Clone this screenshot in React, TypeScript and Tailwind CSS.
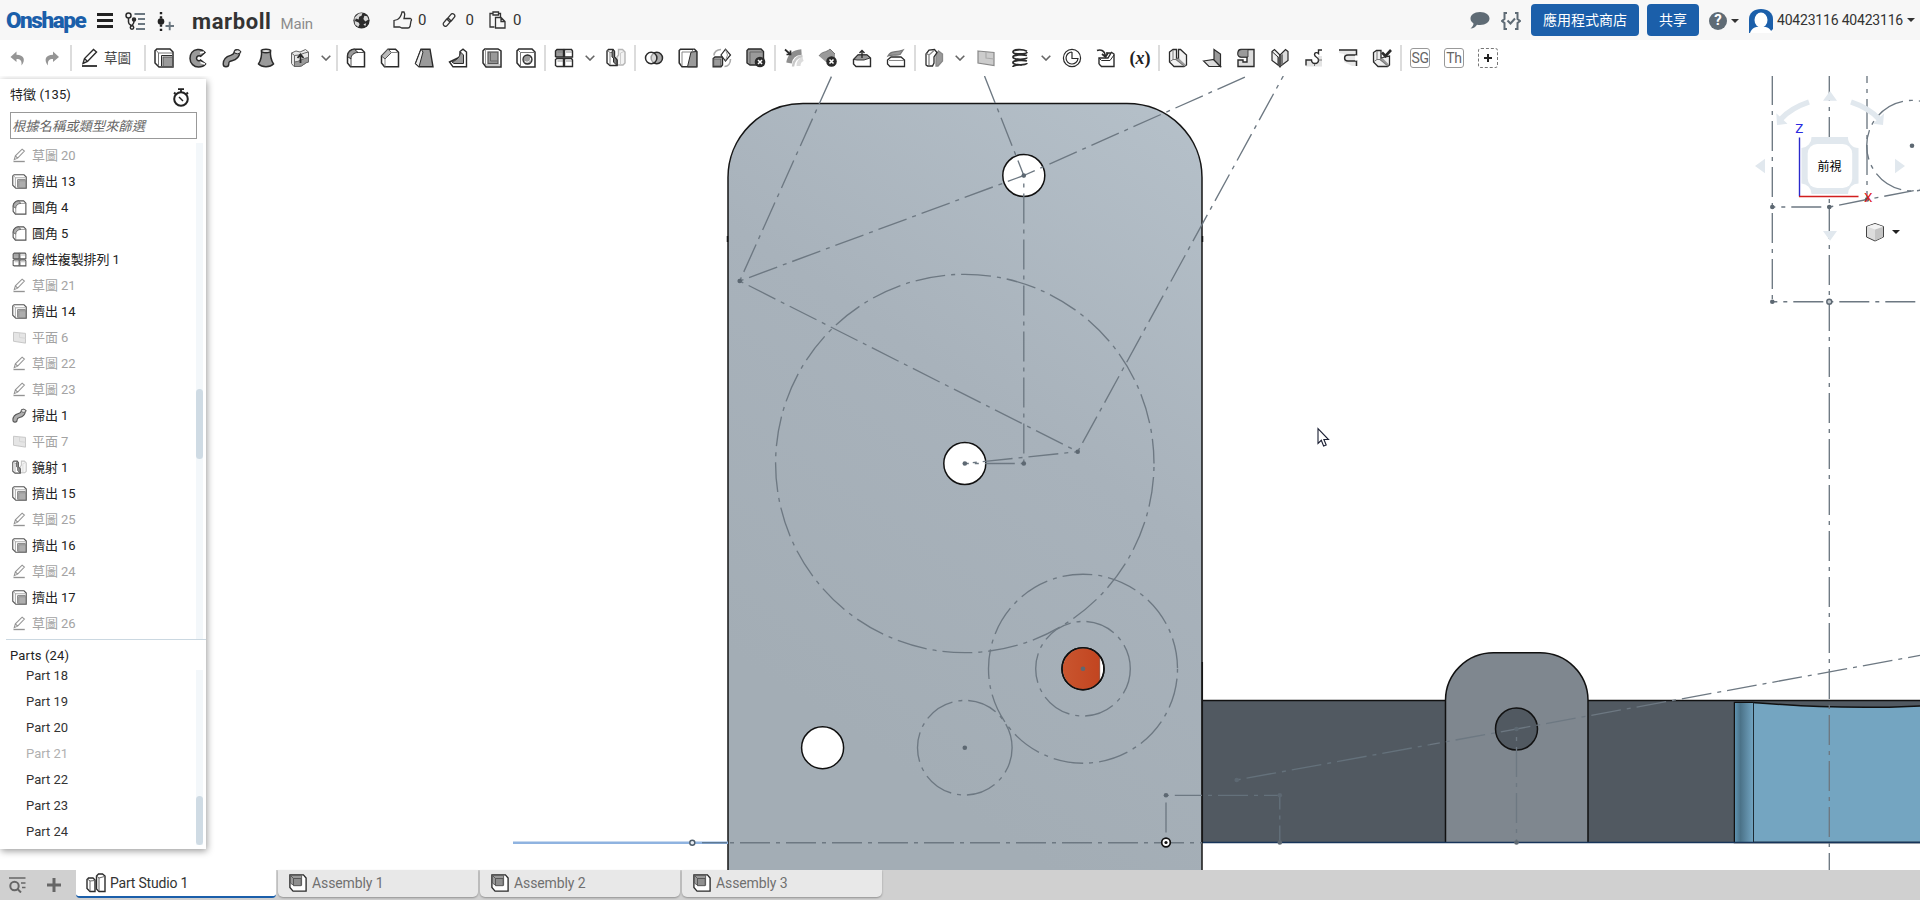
import React from "react";

const K = "#2b2b2b";
const G = "#9a9a9a";

const icons: Record<string, React.ReactNode> = {
  undo: <path d="M8.500 3.500 L2.500 9 L8.500 14 V11 C12.500 11 14 12.500 13.500 17.500 C18 12 16 7 8.500 6.800 Z" fill="#959595" />,
  redo: <path d="M11 3.500 L17 9 L11 14 V11 C7 11 5.500 12.500 6 17.500 C1.500 12 3.500 7 11 6.800 Z" fill="#959595" />,
  pen: (
    <g fill="none" stroke={K} strokeWidth="1.4">
      <path d="M3 15.500 L4.500 10.500 L13.500 1.500 L16.500 4 L7.500 13.500 Z M4.500 10.500 L7.500 13.500" />
      <path d="M2 18 H17" strokeWidth="1.8" />
    </g>
  ),
  extrude: (
    <g stroke={K} strokeWidth="1.5">
      <path d="M1 15 V2.800 L2.800 1 H16 L19 4 V19 H5 Z" fill="#fff" />
      <path d="M4.500 18 V5 H18 M1.500 1.500 L4.500 5" fill="none" stroke="#777" strokeWidth="1" />
      <path d="M7.500 18 V7.500 H18" fill="none" stroke={K} strokeWidth="1" />
      <rect x="9" y="9" width="9.500" height="9.500" fill={G} stroke="#555" strokeWidth="1" />
    </g>
  ),
  revolve: (
    <g>
      <path d="M17 4.500 C15 2 12 1.200 9.500 1.500 C4.500 2 2 6 2 10.500 C2 15.500 6 19 10.500 19 C13.500 19 16 18 17.500 16 L12.500 12 C11 13.500 8.500 12.500 8.500 10.300 C8.500 8 11 7 12.700 8.300 Z" fill={G} stroke={K} strokeWidth="1.5" />
      <path d="M12 5 L16 4 M12.500 14.500 L17 16" stroke="#fff" strokeWidth="1.6" />
    </g>
  ),
  sweep: (
    <g fill="none" strokeLinecap="round">
      <path d="M4 16 C4 7 14 13 15 4.500" stroke={K} strokeWidth="7" />
      <path d="M4 16 C4 7 14 13 15 4.500" stroke={G} strokeWidth="4.200" />
      <ellipse cx="15.500" cy="3.800" rx="3.200" ry="2" fill="#ddd" stroke={K} />
    </g>
  ),
  loft: (
    <g stroke={K} strokeWidth="1.5">
      <path d="M5.500 2.500 C6 8 5 12 2.500 16 C6 19.500 14 19.500 17.500 16 C15 12 14 8 14.500 2.500 Z" fill={G} />
      <ellipse cx="10" cy="3" rx="4.500" ry="1.700" fill="#ddd" />
    </g>
  ),
  thicken: (
    <g stroke="#666" strokeWidth="1">
      <path d="M1.500 5 L6 3 L10 4 L15.500 1.500 L18.500 4 V14 C15 14 13 18.500 9 18.500 H4 L1.500 15.500 Z" fill="#e8e8e8" />
      <path d="M4.500 18.500 V14 C9 14 13 10 18.500 9.500 V14 C15 14 13 18.500 9 18.500 Z" fill={G} />
      <path d="M1.500 5 L4.500 7.500 C10 7.500 13 5 18.500 4 M4.500 7.500 V18" fill="none" />
      <path d="M10.500 15 V7 M7.500 10 L10.500 6.500 L13.500 10" fill="none" stroke={K} strokeWidth="1.800" />
    </g>
  ),
  fillet: (
    <g stroke={K} strokeWidth="1.5">
      <path d="M1.500 15 V8 C1.500 4 5 1.200 8 1.200 H15.500 L18.500 4.200 V18.800 H4.500 Z" fill="#fff" />
      <path d="M1.500 8.500 C2 4 5 1.500 8.500 1.200 L12 4.500 C8 4.500 5 7 5 11 Z" fill={G} strokeWidth="1" />
      <path d="M5 11 V18.500 M12 4.500 H18" fill="none" strokeWidth="1" stroke="#555" />
    </g>
  ),
  chamfer: (
    <g stroke={K} strokeWidth="1.500">
      <path d="M1.500 15 V8 L8 1.200 H15.500 L18.500 4.200 V18.800 H4.500 Z" fill="#fff" />
      <path d="M1.500 8 L8 1.200 L11.500 4.500 L5 11 Z" fill="#bbb" strokeWidth="1" stroke="#555" />
      <path d="M5 11 V18.500 M11.500 4.500 H18" fill="none" strokeWidth="1" stroke="#888" />
    </g>
  ),
  draft: (
    <g stroke={K} strokeWidth="1.400">
      <path d="M1.500 15.500 L7 1.200 H16 L19 18.800 H5 Z" fill={G} />
      <path d="M1.500 15.500 L7 1.200 L9 4 L5 18.800 Z" fill="#eee" strokeWidth="1" />
    </g>
  ),
  rib: (
    <g stroke={K} strokeWidth="1.400">
      <path d="M1.500 14 L12 9 V3.500 L15 1.200 L18.500 4 V18.800 H5 Z" fill="#fff" />
      <path d="M4 14 C9 12 12 9 12.500 4 L15.500 7 V15.500 H6 Z" fill={G} strokeWidth="1" />
    </g>
  ),
  shell: (
    <g stroke={K} strokeWidth="1.500">
      <path d="M1 15 V2.800 L2.800 1 H16 L19 3 V19 H4 Z" fill="#fff" />
      <rect x="6" y="4" width="10" height="11.500" fill={G} stroke="#555" strokeWidth="1.200" />
      <path d="M8.500 4 V13 H15.500" fill="none" stroke="#666" strokeWidth="1" />
      <path d="M3.500 1.500 V17 H18" stroke="#999" strokeWidth="1" fill="none" />
    </g>
  ),
  hole: (
    <g stroke={K} strokeWidth="1.500">
      <path d="M1 15 V2.800 L2.800 1 H16 L19 4 V19 H4.500 Z" fill="#fff" />
      <path d="M4.500 18.500 V4.500 H18.500 M1.500 1.500 L4.500 4.500" fill="none" stroke="#777" strokeWidth="1" />
      <circle cx="11.500" cy="11.500" r="4.500" fill={G} strokeWidth="1.300" />
      <path d="M9 13.500 A3.500 3.500 0 0 0 14.500 10" stroke="#fff" strokeWidth="1" fill="none" />
    </g>
  ),
  pattern: (
    <g stroke={K} strokeWidth="1.400" fill="#fff">
      <path d="M1.500 8.500 V3 L3 1.500 H9.500 V9 H2.500 Z" fill={G} />
      <path d="M10.500 9 V1.500 H17.500 L18.500 3 V9 Z" />
      <path d="M1.500 17.500 V11.500 L3 10.500 H9.500 V18.500 H3 Z" />
      <path d="M10.500 18.500 V10.500 H17.500 L18.500 12 V18.500 Z" />
      <path d="M3.500 4 H9 M12 4 H18 M3.500 13 H9 M12 13 H18" stroke="#777" strokeWidth=".8" />
    </g>
  ),
  mirror: (
    <g strokeWidth="1.400">
      <path d="M19 15 V4 L16.500 1.500 H12.500 V7 L11 9 V17 H17 Z" fill="#f3f3f3" stroke="#b5b5b5" />
      <path d="M14.500 16.500 V5 L18 3.500" fill="none" stroke="#ccc" strokeWidth="1" />
      <path d="M1 15 V3 L2.500 1.500 H7 L8.500 3.500 V9 L11 12 V17.500 H4 Z" fill="#fff" stroke={K} />
      <path d="M4 17 V4.500 L1.500 2.500 M4 4.500 H8" fill="none" stroke="#777" strokeWidth=".9" />
      <path d="M7 1.500 L8.500 3.500 V9 L11 12 V17.500 L7.500 14 V10 L6 9 V4 Z" fill="#777" stroke={K} strokeWidth="1" />
    </g>
  ),
  boolean: (
    <g fill="none" stroke={K} strokeWidth="1.500">
      <circle cx="12.800" cy="10" r="5.700" fill="#aaa" />
      <circle cx="7.200" cy="10" r="5.700" fill="#fff" fillOpacity=".55" />
    </g>
  ),
  split: (
    <g stroke={K} strokeWidth="1.500">
      <path d="M1.200 15 V2.500 L2.500 1.200 H16.500 L18.800 3.500 V18.800 H4 Z" fill="#fff" />
      <path d="M13 4 L18.800 3.500 V18.800 H9.500 Z" fill={G} strokeWidth="1" />
      <path d="M4 18 V4 H13 L15.500 1.500" fill="none" stroke="#888" strokeWidth="1" />
    </g>
  ),
  transform: (
    <g stroke={K} strokeWidth="1.200">
      <path d="M2 7.500 C2 4 5 1.500 9 1.500 M18.500 11 C18.500 15.500 16 18.500 12.500 18.500" fill="none" stroke="#aaa" strokeWidth="1.600" />
      <path d="M1.200 10.500 L3 9 H10.500 V17 L9 18.800 H1.200 Z" fill="#ccc" strokeWidth="1.400" />
      <rect x="1.800" y="11" width="7" height="7" fill={G} stroke="#555" strokeWidth=".8" />
      <path d="M9 7 L13.500 1.200 L18.500 7 L13.500 13 Z" fill="#fff" />
      <path d="M13.500 1.500 L15.500 7 L13.500 12.500" fill="none" stroke="#888" strokeWidth=".9" />
    </g>
  ),
  deletePart: (
    <g>
      <path d="M1 15 V2.500 L2.500 1 H15 L17.500 3.500 V17 H4 Z" fill={G} stroke={K} strokeWidth="1.400" />
      <path d="M4 16 V4 H17" fill="none" stroke="#666" />
      <circle cx="14" cy="14" r="5.300" fill={K} />
      <path d="M12 12 L16 16 M16 12 L12 16" stroke="#fff" strokeWidth="1.600" />
    </g>
  ),
  modFillet: (
    <g fill="none">
      <path d="M14.500 18 C14.500 14 16 12 19 11" stroke="#dcdcdc" strokeWidth="4" />
      <path d="M9 18.500 C9.500 12.500 12.500 9 18.500 8" stroke="#c8c8c8" strokeWidth="2.400" />
      <path d="M5 15 C6 8 10 4.500 17.500 4" stroke="#8e8e8e" strokeWidth="5.500" />
      <path d="M1 1.500 L6.500 6.500 M6.500 2.500 V6.500 H2.500" stroke={K} strokeWidth="1.700" />
    </g>
  ),
  deleteFace: (
    <g>
      <path d="M1 8 C4 3 8 5 12 1 L17 6 V10 L8 14 Z" fill={G} />
      <path d="M1 8 C4 3 8 5 12 1 L17 6" fill="none" stroke="#777" />
      <circle cx="13.500" cy="13.500" r="5.300" fill={K} />
      <path d="M11.500 11.500 L15.500 15.500 M15.500 11.500 L11.500 15.500" stroke="#fff" strokeWidth="1.600" />
    </g>
  ),
  moveFace: (
    <g stroke={K} strokeWidth="1.400">
      <path d="M1.500 16 V11.500 L6 7 H15 L18.500 10 V18.500 H4 Z" fill="#fff" />
      <path d="M2 11.500 L6 7 H15 L18 10 L12 12 H5 Z" fill={G} strokeWidth=".9" />
      <path d="M10 10 V2.500 M7.500 5 L10 2.500 L12.500 5" fill="none" />
    </g>
  ),
  replaceFace: (
    <g stroke={K} strokeWidth="1.300">
      <path d="M1.500 16 V12 L5 9 H15 L18.500 12 V18.500 H4 Z" fill="#fff" />
      <path d="M3 12.500 H18" stroke="#888" strokeWidth="1" />
      <path d="M2 8 C5 2 9 5 17 2 L14 6.500 C10 8 7 6 2 8 Z" fill={G} stroke="#777" />
    </g>
  ),
  offset: (
    <g strokeWidth="1.300">
      <path d="M12 18 V7 L14.500 3 L18.500 6 V13 L14 18 Z" fill={G} stroke="#888" />
      <path d="M2 17 V6 L5 2 L10.500 1.500 L13 4.500 L10 9 V15 L8.500 18 H3.500 Z" fill="#fff" stroke={K} />
      <path d="M5 17.500 V7 L10 2.500 M5 7 L2.500 5.500" fill="none" stroke="#888" />
    </g>
  ),
  plane: (
    <g stroke="#888" strokeWidth="1.200">
      <path d="M2 3 L18 4.500 V17.500 L2 15 Z" fill="#ccc" />
      <path d="M10 4 V10 L18 11" fill="none" stroke="#aaa" />
    </g>
  ),
  helix: (
    <g fill="none" stroke={K} strokeWidth="1.800">
      <path d="M17 3.200 C12 .8 3 1.500 3 4 C3 6.500 17 6.500 17 4 M3 9 C3 6.500 14 6.500 17 7.500 M3 9 C3 12 17 12 17 9.500 M3 14.500 C3 12 14 12 17 13 M3 14.500 C3 17.500 17 17.500 17 15 M3 19 C3 17 9 16.500 12 17" />
    </g>
  ),
  curve: (
    <g fill="none" stroke={K} strokeWidth="1.200">
      <circle cx="10" cy="10" r="8.600" />
      <path d="M10 4 V10.500 H16 A6 6 0 1 1 10 4" />
    </g>
  ),
  derive: (
    <g stroke={K} strokeWidth="1.400">
      <path d="M3 16 V10 H12 L15 5 H10 M3 16 L5.500 18.500 H18 V6 L15 4" fill="#fff" />
      <path d="M3 10 L5.500 12.500 H14 L18 7" fill="none" strokeWidth="1" />
      <path d="M1 2.500 C5 1 9 3 9.500 8 M6 6 L9.500 9 L12 5" fill="none" strokeWidth="1.700" />
    </g>
  ),
  smModel: (
    <g stroke={K} strokeWidth="1.300">
      <path d="M1.500 14 V4 L5 1.500 H8.500 V10.500 H10.500 V1.500 H12.500 L18.500 7 V17 L16 18.500 H6 Z" fill="#f2f2f2" />
      <path d="M8.500 10.500 H11 L18 17 L16 18.500 L7 11.500 Z" fill="#999" stroke="none" />
      <path d="M5 2 V11.500 L2 13.500 M5 11.500 H8 L16 18" fill="none" stroke="#777" strokeWidth="1" />
    </g>
  ),
  flange: (
    <g stroke={K} strokeWidth="1.200">
      <path d="M1.500 13 L12 11.500 L18.500 18.500 H7 Z" fill="#ddd" />
      <path d="M12 1.500 L18.500 6 V18.500 L12 12 Z" fill={G} />
    </g>
  ),
  hem: (
    <g stroke={K} strokeWidth="1.400">
      <path d="M2 18.500 V12 H7 V14 H11 V9 H5 C1 9 1 1.500 5 1.500 H18 V18.500 Z" fill="#ddd" />
      <path d="M2.500 8 C1 5 2.500 2 6 1.500 H12 V9 H5 Z" fill={G} strokeWidth=".8" />
    </g>
  ),
  tab: (
    <g stroke={K} strokeWidth="1.200">
      <path d="M2 3.500 L4.500 1.500 L10 7 V18.500 L2 12.500 Z" fill="#f0f0f0" />
      <path d="M18 3.500 L15.500 1.500 L10 7 V18.500 L18 12.500 Z" fill="#ddd" />
      <path d="M8 9 L13 6 V16 L10 18.500 L8 17 Z" fill="#777" stroke="none" />
      <path d="M2 3.500 L8 9 V17 M10 7 V18.500" fill="none" strokeWidth="1" />
    </g>
  ),
  joint: (
    <g>
      <path d="M2 12 H8 V14 H14 V8 H18 V18.500 H2 Z" fill="#e4e4e4" />
      <path d="M2 17.500 V12 H7.500 C7.500 17 14.500 16.500 14.500 12 C14.500 9 10.500 9.500 10.500 6.500 C10.500 4.500 13 4 14.500 5.500 V2 H18" fill="none" stroke={K} strokeWidth="1.400" />
      <path d="M14.500 12 H18 M10.500 16 V18" stroke="#777" />
    </g>
  ),
  corner: (
    <g>
      <path d="M1 1.500 H18.500 V18 H14 L6 14 V6 L1 5 Z" fill="#e8e8e8" />
      <path d="M1 2 H18.500 V7 H10 C5.500 7 5.500 13 10 13 H18.500 V18" fill="none" stroke={K} strokeWidth="1.500" />
      <path d="M18 7.500 V12.500" stroke="#fff" strokeWidth="2" />
    </g>
  ),
  finish: (
    <g stroke={K} strokeWidth="1.300">
      <path d="M1.500 14 V4.500 L4.500 2.500 H9 V10.500 L12 9 L17.500 8 V17 L15.500 18.500 H6 Z" fill="#f0f0f0" />
      <path d="M8.500 10.500 H11 L17 16.500 L15.500 18.500 L7 11.500 Z" fill="#999" stroke="none" />
      <path d="M5 3 V11.500 L2 13.500 M5 11.500 H8 L16 18" fill="none" stroke="#777" strokeWidth="1" />
      <path d="M10 4.500 L13.500 8 L19 2" fill="none" strokeWidth="2.600" />
    </g>
  ),
  assembly: (
    <g stroke={K} strokeWidth="1.500">
      <path d="M1 15 V1 H16 L19 4.500 V19 H4.500 Z" fill="#fff" />
      <path d="M1.500 1.500 H14 V12.500 H5 L1.500 10 Z" fill={G} stroke="#555" strokeWidth="1" />
      <path d="M5 5 V12 M1.500 1.500 L5 5 H13.500" fill="none" stroke="#555" strokeWidth="1" />
      <path d="M5 5 H13.500 V13 H5 Z" fill="#8f8f8f" stroke="#555" strokeWidth="1" />
    </g>
  ),
  studio: (
    <g stroke={K} strokeWidth="1.400" fill="#fff">
      <path d="M1 15.500 V6.500 L2.500 5 H7 L9 7 V18.500 H4 Z" />
      <path d="M10.500 16 V3 L12.500 1 H16.500 L19 3 V18.500 H13 Z" />
      <path d="M4 18 V8 L1.500 6 M4 8 L9 7.500 M13 18 V5 L10.500 3 M13 5 L18.500 3.500" fill="none" strokeWidth="1" stroke="#666" />
    </g>
  ),
};

function Icon({ name, className = "size-5" }: { name: string; className?: string }) {
  return (
    <svg viewBox="0 0 20 20" className={`block shrink-0 ${className}`}>
      {icons[name]}
    </svg>
  );
}

const Tool = ({ name }: { name: string }) => (
  <button className="flex w-[34px] items-center justify-center">
    <Icon name={name} />
  </button>
);
const Sep = () => <div className="mx-px h-[26px] w-0.5 shrink-0 bg-[#dcdcdc]" />;
const Chevron = () => (
  <button className="flex w-[18px] items-center justify-center">
    <svg viewBox="0 0 10 6" className="w-2.5">
      <path d="M.7 .7 L5 5 L9.300 .7" fill="none" stroke="#666" strokeWidth="1.600" />
    </svg>
  </button>
);
const Caret = () => (
  <svg viewBox="0 0 8 4" className="block w-2 shrink-0">
    <path d="M0 0 H8 L4 4 Z" fill="#333" />
  </svg>
);
const Tools = ({ names }: { names: string[] }) => (
  <>
    {names.map((n) => (
      <Tool key={n} name={n} />
    ))}
  </>
);

function TopBar() {
  return (
    <header className="flex h-10 shrink-0 items-center bg-[#f7f7f7] pl-1.5 pr-[5px] text-[#333]">
      <span className="w-[91px] text-[22.500px] font-black leading-10 tracking-[-1.450px] text-[#1b5faa]">Onshape</span>
      <svg viewBox="0 0 16 15" className="mt-px w-4">
        <path d="M0 1.500H16M0 7.500H16M0 13.500H16" stroke="#222" strokeWidth="3" />
      </svg>
      <svg viewBox="0 0 20 18" className="ml-3 mt-0.5 w-5 shrink-0" fill="none">
        <g stroke="#2b2b2b" strokeWidth="1.500">
          <circle cx="3.500" cy="3.500" r="2.500" />
          <path d="M3.500 6 V10 C3.500 13 6 13 7 14 M9 9 C9 13 7 12 7 14" />
          <circle cx="9" cy="7.500" r="1.500" fill="#2b2b2b" />
          <circle cx="7" cy="15.500" r="1.700" />
        </g>
        <path d="M9.500 2H20M13 7H20M13 12H20M11 17H20" stroke="#6b7780" strokeWidth="1.800" />
      </svg>
      <svg viewBox="0 0 17 19" className="ml-3 mt-0.5 w-[17px] shrink-0">
        <path d="M4 0V19" stroke="#222" strokeWidth="2.400" strokeDasharray="2.200 2" />
        <circle cx="4" cy="9.500" r="3.300" fill="#222" />
        <path d="M8.500 14H17M12.700 9.800V18.200" stroke="#6b7780" strokeWidth="1.900" />
      </svg>
      <div className="ml-[18px] mt-[3px] flex w-[161px] items-baseline gap-[9px]">
        <span className="text-[22px] font-bold leading-9 tracking-[0.600px]">marboll</span>
        <span className="text-[15px] tracking-[-0.200px] text-[#8c8c8c]">Main</span>
      </div>
      <svg viewBox="0 0 18 18" className="w-[17px] shrink-0">
        <circle cx="9" cy="9" r="8.600" fill="#2b2b2b" />
        <path d="M6 1.500 L10 1 L9 4 L6.500 5 L6 8 L3 7 L2 9.500 L6 11 L7 13 L5.500 16 L2 13 L1.500 6 Z M12 4 L15 4.500 L16.500 8 L13 10 L11 7.500 Z M11 13 L14 12 L13 15 Z" fill="#f7f7f7" opacity=".85" />
      </svg>
      <svg viewBox="0 0 20 18" className="ml-[23px] w-5 shrink-0">
        <path d="M1 9.500 L4.500 8.500 C8 6.500 8.500 3.500 9 1 L11 1 C12.500 3 11.500 5 11 7.500 H17.500 C19 8 18.500 9.500 18 10 L17 15.500 C16.500 16.800 16 17 15 17 H9 L6.500 16 H1 Z" fill="none" stroke="#333" strokeWidth="1.300" />
      </svg>
      <span className="ml-[5px] text-[15px]">0</span>
      <svg viewBox="0 0 14 14" className="ml-4 w-3.5 shrink-0" fill="none" stroke="#333" strokeWidth="1.300">
        <rect x="7" y=".3" width="4.500" height="8.500" rx="2.250" transform="rotate(40 9.250 4.500)" />
        <rect x="2.500" y="5.200" width="4.500" height="8.500" rx="2.250" transform="rotate(40 4.750 9.500)" />
      </svg>
      <span className="ml-[9px] text-[15px]">0</span>
      <svg viewBox="0 0 17 18" className="ml-[15px] w-[17px] shrink-0" fill="none" stroke="#333" strokeWidth="1.300">
        <path d="M5.500 16 H1 V2.500 H4 M9.500 2.500 H11.500 V6" />
        <path d="M4 1 H9.500 V4 H4 Z M6.500 6.500 H12 L16 10.500 V17 H6.500 Z M12 6.500 V10.500 H16" />
      </svg>
      <span className="ml-[7px] text-[15px]">0</span>

      <div className="ml-auto flex items-center">
        <svg viewBox="0 0 20 17" className="w-5">
          <path d="M10 0 C16 0 19.500 3 19.500 6.500 C19.500 10 16 13 10 13 C9 13 8 13 7 12.700 C5.500 15 3.500 16.300 .5 16.500 C2.500 15 3.500 13 3.500 11.500 C1.500 10 .5 8.500 .5 6.500 C.5 3 4 0 10 0Z" fill="#5f6b75" />
        </svg>
        <svg viewBox="0 0 20 18" className="ml-[11px] mt-px w-5" fill="none" stroke="#5f6b75" strokeWidth="2">
          <path d="M6 1 H3.500 V7 L1 9 L3.500 11 V17 H6 M14 1 H16.500 V7 L19 9 L16.500 11 V17 H14 M6.500 8.500 L9.500 11.500 L14 6.500" />
        </svg>
        <button className="ml-2.5 h-8 w-[108px] rounded bg-[#1b5faa] text-sm text-white">應用程式商店</button>
        <button className="ml-2 h-8 w-[52px] rounded bg-[#1b5faa] text-sm text-white">共享</button>
        <span className="ml-2.5 mt-px flex size-[18px] items-center justify-center rounded-full bg-[#5f6b75] text-[15px] font-bold leading-none text-white">?</span>
        <div className="ml-1 mt-0.5">
          <Caret />
        </div>
        <svg viewBox="0 0 24 24" className="ml-2.5 mt-px w-6">
          <path d="M0 24 V10 C0 4 5 0 12 0 C19 0 24 4 24 10 V20 L20 24Z" fill="#1b5faa" />
          <ellipse cx="12" cy="11" rx="6.500" ry="7.500" fill="#fff" />
          <path d="M1 24 C3 18 8 17.500 12 17.500 C16 17.500 21 18 23 24Z" fill="#fff" />
        </svg>
        <span className="ml-1 mr-1 whitespace-nowrap text-sm tracking-[-0.200px]">40423116 40423116</span>
        <Caret />
      </div>
    </header>
  );
}

function Toolbar() {
  return (
    <div className="flex h-9 shrink-0 items-center bg-white pl-px">
      <Tools names={["undo", "redo"]} />
      <Sep />
      <button className="flex w-[70px] items-center gap-1 pl-[7px] text-[13.500px] text-[#444]">
        <Icon name="pen" />
        <span className="mt-px whitespace-nowrap">草圖</span>
      </button>
      <Sep />
      <Tools names={["extrude", "revolve", "sweep", "loft", "thicken"]} />
      <Chevron />
      <Sep />
      <Tools names={["fillet", "chamfer", "draft", "rib", "shell", "hole"]} />
      <Sep />
      <Tool name="pattern" />
      <Chevron />
      <Tool name="mirror" />
      <Sep />
      <Tools names={["boolean", "split", "transform", "deletePart"]} />
      <Sep />
      <Tools names={["modFillet", "deleteFace", "moveFace", "replaceFace"]} />
      <Sep />
      <Tool name="offset" />
      <Chevron />
      <Tools names={["plane", "helix"]} />
      <Chevron />
      <Tools names={["curve", "derive"]} />
      <button className="flex w-[34px] items-center justify-center font-[Liberation_Serif,serif] text-[18px] font-bold text-[#222]">
        (<i>x</i>)
      </button>
      <Sep />
      <Tools names={["smModel", "flange", "hem", "tab", "joint", "corner", "finish"]} />
      <Sep />
      <div className="flex gap-3.5 pl-[7px] text-sm tracking-[-0.300px] text-[#666]">
        <button className="flex size-5 items-center justify-center rounded-[3px] border border-[#999]"><span>SG</span></button>
        <button className="flex size-5 items-center justify-center rounded-[3px] border border-[#999]"><span>Th</span></button>
        <button className="flex size-5 items-center justify-center rounded-[3px] border border-dashed border-[#777]">
          <svg viewBox="0 0 8 8" className="w-2">
            <path d="M0 4H8M4 0V8" stroke="#222" strokeWidth="2" />
          </svg>
        </button>
      </div>
    </div>
  );
}

const features: [string, string, boolean][] = [
  ["pen", "草圖 20", false],
  ["extrude", "擠出 13", true],
  ["fillet", "圓角 4", true],
  ["fillet", "圓角 5", true],
  ["pattern", "線性複製排列 1", true],
  ["pen", "草圖 21", false],
  ["extrude", "擠出 14", true],
  ["plane", "平面 6", false],
  ["pen", "草圖 22", false],
  ["pen", "草圖 23", false],
  ["sweep", "掃出 1", true],
  ["plane", "平面 7", false],
  ["mirror", "鏡射 1", true],
  ["extrude", "擠出 15", true],
  ["pen", "草圖 25", false],
  ["extrude", "擠出 16", true],
  ["pen", "草圖 24", false],
  ["extrude", "擠出 17", true],
  ["pen", "草圖 26", false],
];

const parts = [18, 19, 20, 21, 22, 23, 24];

function FeaturePanel() {
  return (
    <aside className="absolute left-0 top-[3px] flex h-[770px] w-[206px] flex-col bg-white text-[13px] text-[#333] shadow-[1px_2px_7px_rgba(0,0,0,0.4)]">
      <div className="flex h-[33px] shrink-0 items-center justify-between pl-2.5 pr-4 pt-1">
        <span className="-mt-1.5 tracking-[0.100px] text-[#222]">特徵 (135)</span>
        <svg viewBox="0 0 18 19" className="w-[18px]" fill="none" stroke="#222">
          <circle cx="9" cy="11" r="6.800" strokeWidth="2" />
          <path d="M6 1.200 H12 M9 1 V4 M14.500 4.500 L16 6 M2 6 L3.500 4.500" strokeWidth="1.800" />
          <path d="M7 9 L11 13" strokeWidth="1.500" />
        </svg>
      </div>
      <div className="ml-2.5 flex h-[27px] w-[187px] shrink-0 items-center border border-[#999] pl-px pt-0.5 text-[13.300px] italic text-[#666]">
        <span className="whitespace-nowrap">根據名稱或類型來篩選</span>
      </div>
      <div className="mt-1 flex h-[496px] shrink-0">
        <ul className="w-[196px]">
          {features.map(([icon, label, on]) => (
            <li key={label} className={on ? "flex h-[26px] items-center gap-[5px] pl-3 text-[#222]" : "flex h-[26px] items-center gap-[5px] pl-3 text-[#a3a3a3]"}>
              <Icon name={icon} className={on ? "size-[15px] opacity-80 -mt-0.5" : "size-[15px] opacity-50 -mt-0.5"} />
              <span className="whitespace-nowrap tracking-[-0.100px]">{label}</span>
            </li>
          ))}
        </ul>
        <div className="w-[7px] bg-[#f3f7fa] pt-[246px]">
          <div className="h-[70px] rounded-sm bg-[#cfdbe4]" />
        </div>
      </div>
      <div className="ml-1.5 h-px shrink-0 bg-[#cbd8e1]" />
      <div className="flex h-[23px] shrink-0 items-start pl-2.5 pt-1.5 tracking-[0.150px] text-[#222]">
        <span>Parts (24)</span>
      </div>
      <div className="flex">
        <ul className="w-[196px] pl-[26px]">
          {parts.map((n) => (
            <li key={n} className={n === 21 ? "flex h-[26px] items-center text-[#b0b0b0]" : "flex h-[26px] items-center"}>
              Part {n}
            </li>
          ))}
        </ul>
        <div className="mt-[7px] h-[175px] w-[7px] bg-[#f3f7fa] pt-[126px]">
          <div className="h-[49px] rounded-sm bg-[#cfdbe4]" />
        </div>
      </div>
    </aside>
  );
}

function Dot({ x, y }: { x: number; y: number }) {
  return <circle cx={x} cy={y} r="2.300" fill="#5d6872" stroke="none" />;
}

function Model() {
  return (
    <svg viewBox="0 76 1920 794" className="block h-[794px] w-[1920px]">
      <defs>
        <linearGradient id="plate" gradientUnits="userSpaceOnUse" x1="1200" y1="120" x2="800" y2="700">
          <stop offset="0" stopColor="#b5c0c9" />
          <stop offset=".5" stopColor="#a8b2bb" />
          <stop offset="1" stopColor="#a3adb5" />
        </linearGradient>
        <linearGradient id="edge" x1="0" x2="1" y1="0" y2="0">
          <stop offset="0" stopColor="#5d92b0" />
          <stop offset=".3" stopColor="#4b7288" />
          <stop offset="1" stopColor="#71a3c0" />
        </linearGradient>
        <linearGradient id="shaft" x1="0" x2="1" y1="0" y2="0">
          <stop offset="0" stopColor="#c9552f" />
          <stop offset="1" stopColor="#c24520" />
        </linearGradient>
      </defs>

      <rect x="1201.500" y="700.500" width="720" height="142" fill="#515961" />
      <path d="M1201.500 700.500 H1920" stroke="#111" strokeWidth="1.500" />
      <path d="M1734.500 842.500 V702.500 H1753 C1780 704.500 1805 706.500 1829 706.700 C1850 707 1870 707.300 1889 707.300 L1925 705.800 V842.500 Z" fill="#74a5c1" stroke="#111" strokeWidth="1.500" />
      <rect x="1735" y="703" width="18" height="139" fill="url(#edge)" />
      <path d="M1753.500 702.500 V842" stroke="#1d2a33" />
      <path d="M1445.500 842.500 V700 A48 47.500 0 0 1 1493.500 652.800 H1540 A48 47.500 0 0 1 1588 700 V842.500" fill="#7f878f" stroke="#111" strokeWidth="1.500" />
      <circle cx="1516.500" cy="729" r="21" fill="#515961" stroke="#111" strokeWidth="1.500" />
      <path d="M1202 842.500 H1920" stroke="#17345a" strokeWidth="1.700" />

      <path d="M728 872 V178 A75 74 0 0 1 803 103.500 H1127 A75 74 0 0 1 1202 178 V872" fill="url(#plate)" stroke="#161616" strokeWidth="1.500" />
      <path d="M727.500 236 V242 M1202.500 236 V242 M1202.300 662 V842" stroke="#161616" strokeWidth="1.500" />
      <g fill="#fff" stroke="#111" strokeWidth="1.500">
        <circle cx="1023.800" cy="175.500" r="21" />
        <circle cx="964.800" cy="463.500" r="21" />
        <circle cx="822.600" cy="747.700" r="21" />
        <circle cx="1083" cy="668.700" r="21" />
      </g>
      <path d="M1099.700 656.500 A20.500 20.500 0 1 0 1099.700 681 Z" fill="url(#shaft)" />
      <path d="M1099.700 656.500 V681" stroke="#8b4a36" strokeWidth=".8" />
      <circle cx="1083" cy="668.700" r="21" fill="none" stroke="#111" strokeWidth="1.600" />

      <path d="M513 842.700 H728" stroke="#8fb3e0" strokeWidth="2.400" />
      <path d="M702 842.700 H727" stroke="#5c7690" strokeWidth="1.300" />

      <g fill="none" stroke="#6d7882" strokeWidth="1.350" strokeDasharray="30 6 4 6" strokeDashoffset="36">
        <path d="M739.700 281 L831.700 76" />
        <path d="M739.700 281 L1023.800 175.500" />
        <path d="M1023.800 175.500 L1246 76.600" strokeDashoffset="18" />
        <path d="M1023.800 175.500 L984.500 76" strokeDashoffset="14" />
        <path d="M739.700 281 L1077.700 451.700" />
        <path d="M1077.700 451.700 L1283.300 76" />
        <path d="M964.800 463.500 L1077.700 451.700" strokeDashoffset="28" />
        <path d="M964.800 463.500 H1023.800" strokeDashoffset="26" />
        <path d="M1023.800 175.500 V463.500" strokeDashoffset="28" />
        <circle cx="964.800" cy="463.500" r="189.200" strokeDashoffset="32.500" />
        <circle cx="1083" cy="668.700" r="94.500" />
        <circle cx="1083" cy="668.700" r="47.300" strokeDashoffset="4" />
        <circle cx="964.800" cy="747.700" r="47.300" strokeDashoffset="4" />
        <path d="M728 842.700 H1202" strokeDashoffset="34" />
        <path d="M1166 842.500 V795.300 H1202" strokeDashoffset="-10" />
        <path d="M1202 795.300 H1279.800 V842" stroke="#64717b" strokeDashoffset="30" />
        <path d="M1236.700 780 L1430 744.700" stroke="#64717b" />
        <path d="M1430 744.700 L1920 655.400" strokeDashoffset="20" />
        <path d="M1516.500 729 V842" strokeDashoffset="28" />
        <path d="M1829.300 76 V870" strokeDashoffset="5" />
        <path d="M1772.300 76 V301.700" strokeDashoffset="1" />
        <path d="M1867 76 V199.500" strokeDashoffset="23" />
        <path d="M1772.300 207 H1829.300" strokeDashoffset="27" />
        <path d="M1829.300 207 L1867 199.500 L1920 189.500" />
        <path d="M1772.300 301.700 H1920" strokeDashoffset="25" />
        <circle cx="1912" cy="145.700" r="45.300" strokeDashoffset="10" />
      </g>
      <Dot x={739.7} y={281} />
      <Dot x={1023.8} y={175.5} />
      <Dot x={1023.8} y={463.5} />
      <Dot x={964.8} y={463.5} />
      <Dot x={1077.7} y={451.7} />
      <Dot x={1083} y={668.7} />
      <Dot x={964.8} y={747.7} />
      <Dot x={1166} y={795.3} />
      <Dot x={1279.8} y={795.3} />
      <Dot x={1279.8} y={842.5} />
      <Dot x={1236.7} y={780} />
      <Dot x={1516.5} y={729} />
      <Dot x={1516.5} y={842.5} />
      <Dot x={1772.3} y={207} />
      <Dot x={1829.3} y={207} />
      <Dot x={1772.3} y={301.7} />
      <Dot x={1867} y={199.5} />
      <Dot x={1912} y={145.7} />
      <circle cx="1829.300" cy="301.700" r="2.500" fill="#c3cad0" stroke="#5d6872" strokeWidth="1.400" />
      <circle cx="692.300" cy="842.700" r="2.500" fill="#e8edf3" stroke="#4e5d6b" strokeWidth="1.400" />
      <circle cx="1166" cy="842.500" r="4.300" fill="#fff" stroke="#111" strokeWidth="1.700" />
      <circle cx="1166" cy="842.500" r="1.600" fill="#111" />

      <g fill="#e1e8ee">
        <path d="M1823 100.700 L1830 91 L1837 100.700Z M1823 231 L1830 240.700 L1837 231Z M1765 158.700 V173.300 L1755 166Z M1895 158.700 V173.300 L1905 166Z" />
        <path d="M1776.300 113.300 L1777 125 L1787.500 123.700Z M1884 113.300 L1883 125 L1873 123.700Z" />
        <path d="M1811.500 137 H1848 A10.500 10.500 0 0 0 1858.500 148 V183.500 A10.500 10.500 0 0 0 1848 194 H1811.500 A10.500 10.500 0 0 0 1801.500 183.500 V148 A10.500 10.500 0 0 0 1811.500 137Z" />
      </g>
      <path d="M1809 102 Q1791 108 1781 119 M1851 102 Q1869 108 1879 119" fill="none" stroke="#e1e8ee" strokeWidth="5.500" />
      <rect x="1807.700" y="144" width="44.500" height="44" rx="9.500" fill="#fff" />
      <path d="M1799.500 137.500 V196.500" stroke="#2a2acb" strokeWidth="1.400" />
      <path d="M1799 196.500 H1858.500" stroke="#d11f1f" strokeWidth="1.400" />
      <text x="1799.300" y="132.500" textAnchor="middle" fontSize="13.500" fill="#2a2ae0">Z</text>
      <text x="1868.300" y="201.500" textAnchor="middle" fontSize="13.500" fill="#e02020">X</text>
      <text x="1829.500" y="171" textAnchor="middle" fontSize="12" fill="#000">前視</text>
      <g stroke="#444" strokeLinejoin="round">
        <path d="M1866.500 226.500 L1875 223.500 L1883.500 226.500 V237 L1875 241 L1866.500 237Z" fill="#ddd" />
        <path d="M1875 229.500 L1883 227 V237 L1875 240.500Z" fill="#c4c4c4" stroke="none" />
        <path d="M1867 226.500 L1875 229.500 L1883 226.500 L1875 224Z" fill="#f4f4f4" stroke="none" />
      </g>
      <path d="M1892 230 H1900 L1896 234Z" fill="#222" />
      <path d="M1318 428.500 V443.500 L1321.300 440.300 L1323.600 446 L1326.200 445 L1323.900 439.500 H1328.500Z" fill="#fff" stroke="#1b1f33" strokeWidth="1.100" />
    </svg>
  );
}

function TabBar() {
  return (
    <footer className="flex h-[30px] shrink-0 items-start bg-[#d0d0d0] text-sm tracking-[-0.200px]">
      <div className="flex h-[30px] w-[76px] items-center">
        <svg viewBox="0 0 17 16" className="ml-[9px] w-[17px]" fill="none" stroke="#666" strokeWidth="2">
          <path d="M0 1H16.500M12 6H16.500M13 10.500H16.500" strokeWidth="1.700" />
          <circle cx="5.500" cy="9" r="4.200" />
          <path d="M8.500 12 L12 15.500" />
        </svg>
        <svg viewBox="0 0 14 14" className="ml-[21px] w-3.5">
          <path d="M0 7H14M7 0V14" stroke="#666" strokeWidth="3" />
        </svg>
      </div>
      <div className="flex h-7 w-[200px] items-center gap-1 rounded-b border-b-2 border-[#1b5faa] bg-white pl-2.5 text-[#333]">
        <Icon name="studio" />
        <span>Part Studio 1</span>
      </div>
      {[1, 2, 3].map((n) => (
        <div key={n} className="ml-0.5 flex h-[27px] w-[200px] items-center gap-[5px] rounded-b-[5px] bg-[#e8e8e8] pl-[11px] text-[#707070] shadow-[0_1px_2px_rgba(0,0,0,0.3)]">
          <Icon name="assembly" className="size-[18px] -mt-0.5" />
          <span className="-mt-px tracking-[-0.100px]">Assembly {n}</span>
        </div>
      ))}
    </footer>
  );
}

export default function App() {
  return (
    <div className="flex h-[900px] w-[1920px] flex-col overflow-hidden bg-white font-[Roboto,'Noto_Sans_CJK_TC',sans-serif]">
      <TopBar />
      <Toolbar />
      <main className="relative h-[794px] shrink-0 overflow-hidden">
        <Model />
        <FeaturePanel />
      </main>
      <TabBar />
    </div>
  );
}
